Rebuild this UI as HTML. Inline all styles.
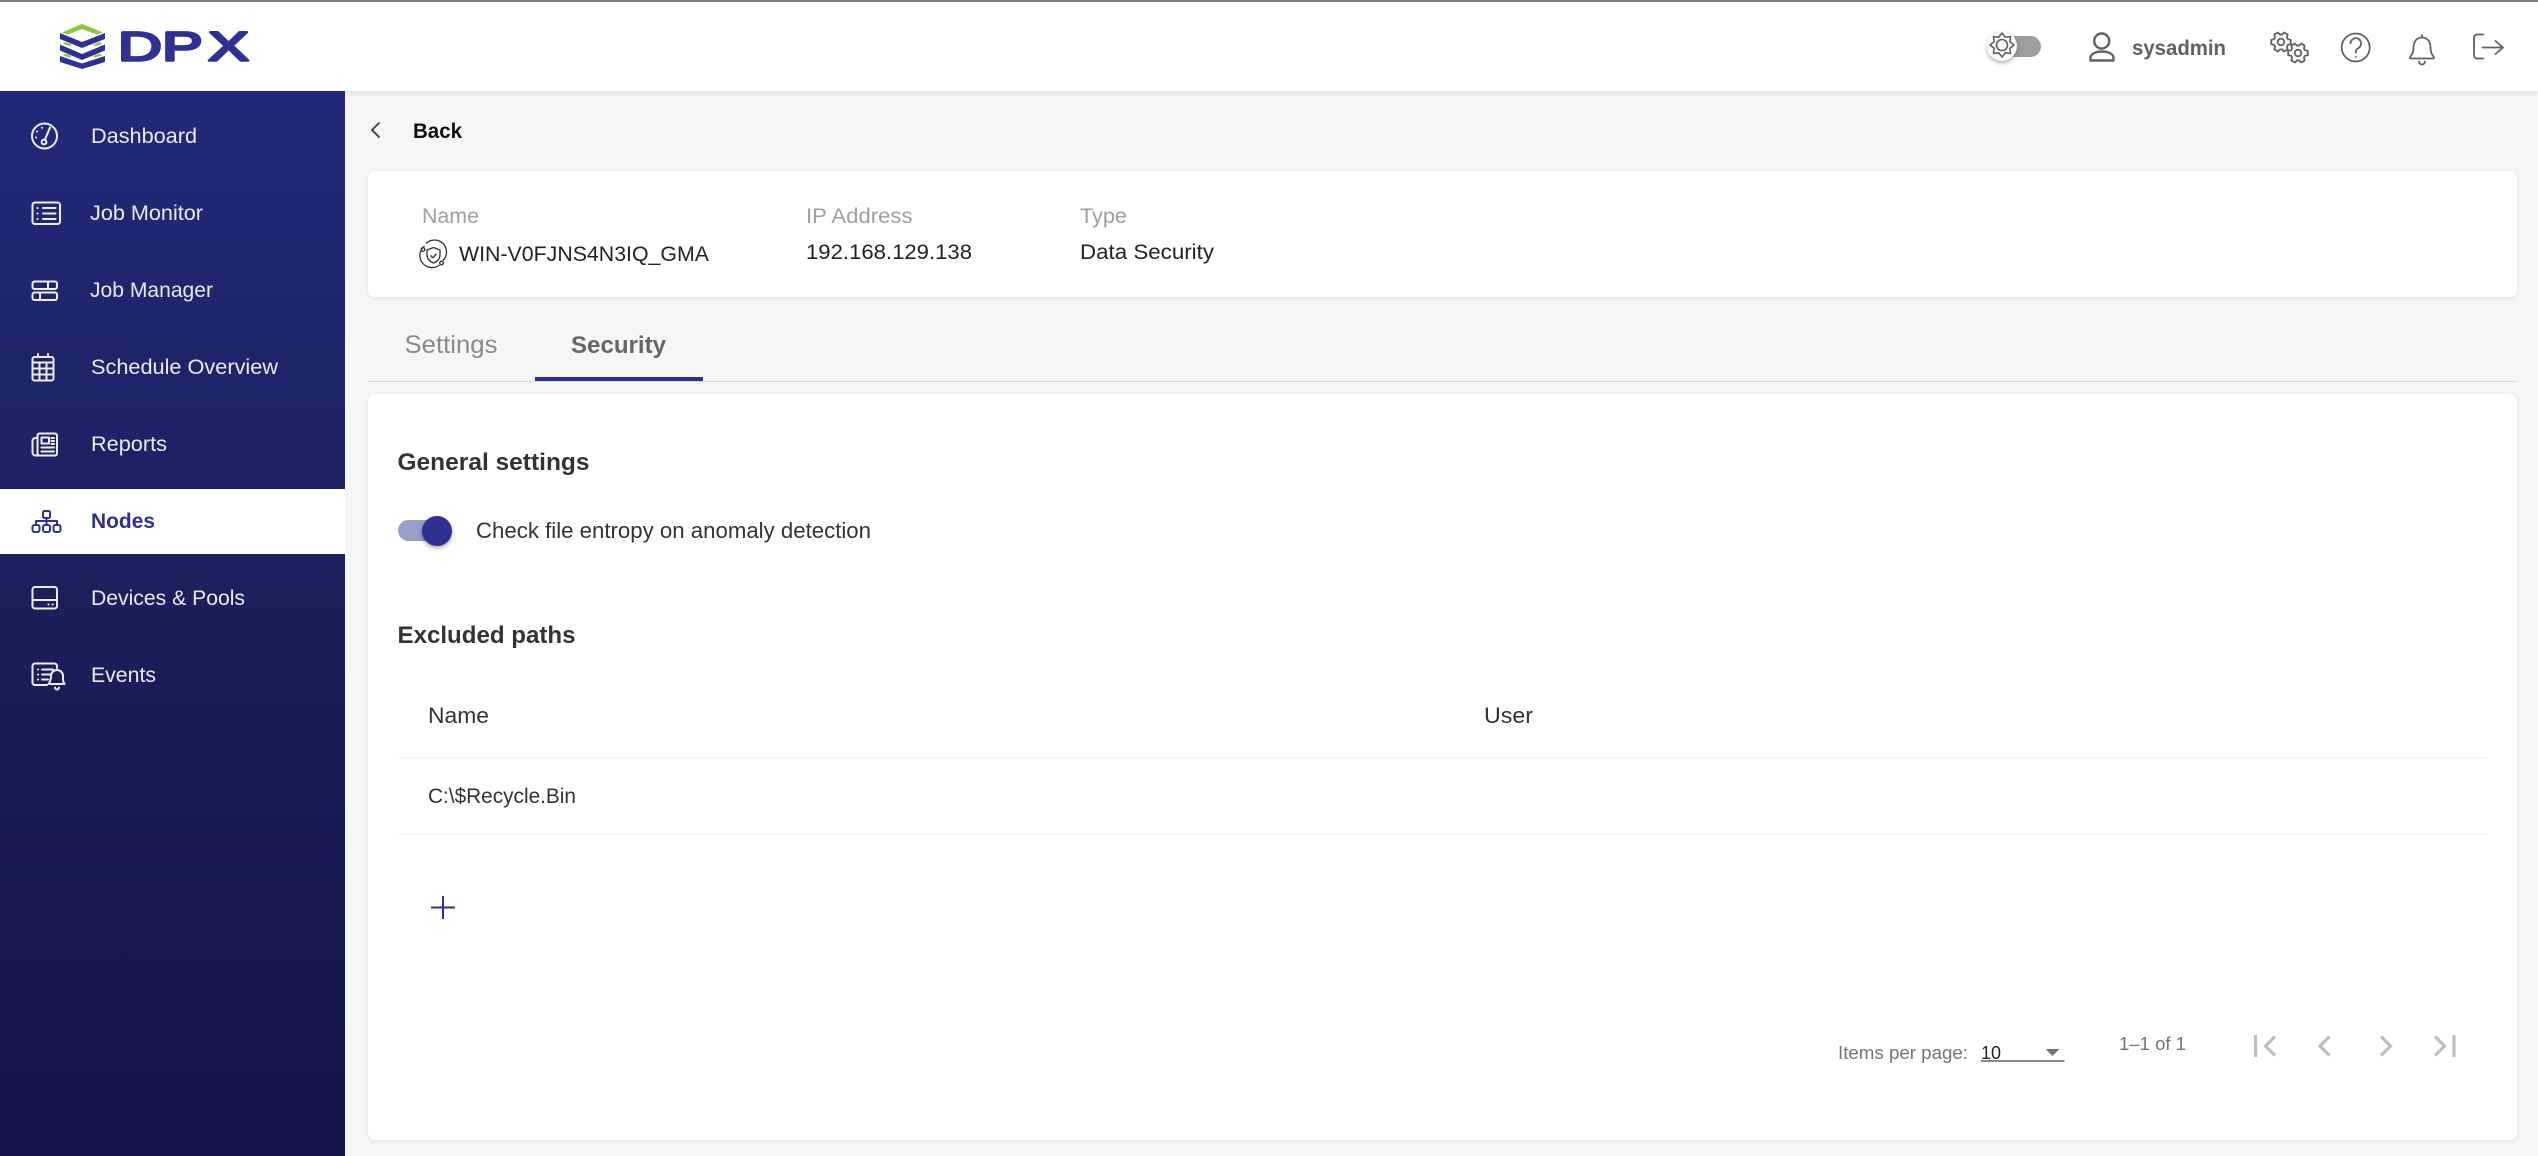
<!DOCTYPE html>
<html lang="en">
<head>
<meta charset="utf-8">
<title>DPX</title>
<style>
html,body{margin:0;padding:0;width:2538px;height:1156px;overflow:hidden;background:#f5f6f8;font-family:"Liberation Sans",sans-serif}
.b{position:absolute;box-sizing:border-box}
svg{position:absolute;left:0;top:0}
text{font-family:"Liberation Sans",sans-serif}
</style>
</head>
<body>
<div class="b" style="left:0;top:0;width:2538px;height:91px;background:#fff;box-shadow:0 2px 6px rgba(0,0,0,.1)"></div>
<div class="b" style="left:0;top:0;width:2538px;height:2px;background:#808080"></div>
<div class="b" style="left:0;top:91px;width:345px;height:1065px;background:linear-gradient(180deg,#23297a 0%,#1f256c 22%,#191d56 59%,#121549 100%)"></div>
<div class="b" style="left:0;top:489px;width:345px;height:65px;background:#fff"></div>
<div class="b" style="left:368px;top:171px;width:2149px;height:126px;background:#fff;border-radius:7px;box-shadow:0 1px 5px rgba(0,0,0,.1)"></div>
<div class="b" style="left:368px;top:381px;width:2149px;height:1px;background:#d8d9de"></div>
<div class="b" style="left:535px;top:377px;width:168px;height:4px;background:#2e3192"></div>
<div class="b" style="left:368px;top:394px;width:2149px;height:746px;background:#fff;border-radius:7px;box-shadow:0 1px 5px rgba(0,0,0,.1)"></div>
<div class="b" style="left:398px;top:757px;width:2088px;height:1px;background:#eee"></div>
<div class="b" style="left:398px;top:834px;width:2088px;height:1px;background:#f1f1f1"></div>
<div class="b" style="left:398px;top:520px;width:46px;height:21px;border-radius:11px;background:#9b9dcb"></div>
<div class="b" style="left:422px;top:516px;width:30px;height:30px;border-radius:50%;background:#2e3192;box-shadow:0 2px 4px rgba(0,0,0,.35)"></div>
<div class="b" style="left:1996px;top:36px;width:45px;height:21px;border-radius:11px;background:#9e9e9e"></div>
<div class="b" style="left:1987px;top:31px;width:30px;height:30px;border-radius:50%;background:#fafafa;box-shadow:0 2px 4px rgba(0,0,0,.3)"></div>

<svg width="2538" height="1156" viewBox="0 0 2538 1156" xmlns="http://www.w3.org/2000/svg">
<defs>
<path id="gear" d="M6.95-2.81L9.78-2.08L9.78 2.08L6.95 2.81L5.91 4.62L6.69 7.43L3.09 9.51L1.04 7.43L-1.04 7.43L-3.09 9.51L-6.69 7.43L-5.91 4.62L-6.95 2.81L-9.78 2.08L-9.78-2.08L-6.95-2.81L-5.91-4.62L-6.69-7.43L-3.09-9.51L-1.04-7.43L1.04-7.43L3.09-9.51L6.69-7.43L5.91-4.62Z"/>
</defs>

<!-- logo -->
<g>
<path fill="#8cc63f" d="M62 32.500L82 24L103 32.500L97 34.500L82 29L68 34.500Z"/>
<g fill="#2e3192">
<path d="M60 33L82 42L105 33V39L82 48L60 39Z"/>
<path d="M60 44.500L82 54L105 44.500V50.500L82 60L60 50.500Z"/>
<path d="M60 56L82 63.500L105 56V62L82 69L60 62Z"/>
</g>
<path fill="#8cc63f" d="M65 42L72 44.500L70 46L63 44ZM100 42L93 44.500L95 46L102 44ZM65 53.500L72 56L70 57.500L63 55.500ZM100 53.500L93 56L95 57.500L102 55.500Z"/>
<text transform="translate(118 60.500) scale(1.5 1)" font-size="40.500" letter-spacing=".2" fill="#2e3192" stroke="#2e3192" stroke-width="2.600" stroke-linejoin="round">DP<tspan dx="3.500">X</tspan></text>
</g>

<!-- sidebar icons -->
<g fill="none" stroke="#eceDf5" stroke-width="2" stroke-linecap="round" stroke-linejoin="round">
<circle cx="44.500" cy="136" r="12.500"/>
<circle cx="44" cy="142" r="2.400"/>
<path d="M45 139.500L50 127.500M37 131.500h.1M42 127.800h.1M36 137.500h.1"/>
<rect x="32.500" y="202.500" width="27.500" height="21.500" rx="2.500"/>
<path d="M43 208h12.500M43 213.500h12.500M43 219h12.500M37.500 208h.1M37.500 213.500h.1M37.500 219h.1"/>
<rect x="32.500" y="281.500" width="24.500" height="7.500" rx="2"/>
<rect x="32.500" y="292.500" width="24.500" height="7.500" rx="2"/>
<path d="M48 281.500v7.500M40 292.500v7.500"/>
<rect x="32.500" y="357" width="21" height="23.500" rx="2"/>
<path d="M38 354v3M48 354v3M32.500 362.500h21M32.500 368.500h21M32.500 374.500h21M39.500 362.500v18M46.500 362.500v18"/>
<rect x="37.500" y="433.500" width="19.500" height="22" rx="2"/>
<path d="M37 438h-1.500a3 3 0 0 0-3 3v11.500a3 3 0 0 0 3 3h3"/>
<rect x="41.500" y="437.500" width="7.500" height="6"/>
<path d="M51.500 438h2.500M51.500 441h2.500M51.500 444h2.500M41.500 447.500h12.500M41.500 451.500h12.500"/>
<rect x="32.500" y="587" width="24.500" height="21.500" rx="2.500"/>
<path d="M32.500 600H57M48.500 604.500h.1M52.500 604.500h.1"/>
<path d="M57 668v-2a2.500 2.500 0 0 0-2.500-2.500H35a2.500 2.500 0 0 0-2.500 2.500v16.500a2.500 2.500 0 0 0 2.500 2.500h12"/>
<path d="M38 669.500h.1M38 674.500h.1M38 679.500h.1M42 669.500h11M42 674.500h8M42 679.500h6"/>
<path d="M57 670a6 6 0 0 0-6 6c0 4-1 6-2.500 8H64.500c-1.500-2-1.500-4-1.500-8a6 6 0 0 0-6-6Z"/>
<path d="M55 687.500a2 2 0 0 0 4 0"/>
</g>
<g fill="none" stroke="#2e3192" stroke-width="2" stroke-linejoin="round">
<rect x="43" y="511" width="7" height="7" rx="1.500"/>
<rect x="32.500" y="525" width="7" height="7" rx="2"/>
<rect x="43" y="525" width="7" height="7" rx="2"/>
<rect x="53.500" y="525" width="7" height="7" rx="2"/>
<path d="M46.500 518v7M36 525v-4h21v4"/>
</g>

<!-- sidebar labels -->
<g font-size="21.500" fill="#e9eaf3">
<text x="91" y="143" textLength="106" lengthAdjust="spacingAndGlyphs">Dashboard</text>
<text x="90" y="220" textLength="113" lengthAdjust="spacingAndGlyphs">Job Monitor</text>
<text x="90" y="297" textLength="123" lengthAdjust="spacingAndGlyphs">Job Manager</text>
<text x="91" y="374" textLength="187" lengthAdjust="spacingAndGlyphs">Schedule Overview</text>
<text x="91" y="451" textLength="76" lengthAdjust="spacingAndGlyphs">Reports</text>
<text x="91" y="528" textLength="64" lengthAdjust="spacingAndGlyphs" font-weight="700" fill="#2e3192">Nodes</text>
<text x="91" y="605" textLength="154" lengthAdjust="spacingAndGlyphs">Devices &amp; Pools</text>
<text x="91" y="682" textLength="65" lengthAdjust="spacingAndGlyphs">Events</text>
</g>

<!-- header right -->
<g fill="none" stroke="#616161" stroke-linecap="round" stroke-linejoin="round">
<path stroke-width="1.600" d="M2014 45L2009.850 48.250L2010.500 53.500L2005.250 52.850L2002 57L1998.750 52.850L1993.500 53.500L1994.150 48.250L1990 45L1994.150 41.750L1993.500 36.500L1998.750 37.150L2002 33L2005.250 37.150L2010.500 36.500L2009.850 41.750Z"/>
<circle cx="2002" cy="45" r="5.500" stroke-width="1.600"/>
<circle cx="2101.700" cy="41" r="7.500" stroke-width="2.400"/>
<path stroke-width="2.400" d="M2090.500 60.500v-2.500c0-4 5-6.500 11.500-6.500s11.500 2.500 11.500 6.500v2.500Z"/>
<use href="#gear" x="2281" y="42" stroke-width="1.800"/>
<circle cx="2281" cy="42" r="3.300" stroke-width="1.800"/>
<use href="#gear" x="2298" y="53" stroke-width="1.800"/>
<circle cx="2298" cy="53" r="3.300" stroke-width="1.800"/>
<circle cx="2355.700" cy="47.500" r="14" stroke-width="1.800"/>
<path stroke-width="1.800" d="M2350.500 43.500a5.300 5.300 0 1 1 8 4.500c-2 1.200-2.800 2-2.800 4.500M2355.700 57h.1"/>
<path stroke-width="1.800" d="M2422 35v2.500c-6 0-8.500 5-8.500 10 0 5-1.500 7-3.300 9.500-.5 1 0 1.500 1 1.500h21.600c1 0 1.500-.5 1-1.500-1.800-2.500-3.300-4.500-3.300-9.500 0-5-2.500-10-8.500-10M2419 61.500a3 3 0 0 0 6 0"/>
<path stroke-width="1.800" d="M2483.500 34.500h-6.500a3 3 0 0 0-3 3v18a3 3 0 0 0 3 3h6.500M2482.500 47.500h20.500M2495.500 41l7.500 6.500-7.500 6.500"/>
</g>
<text x="2132" y="55" font-size="21" font-weight="700" fill="#616161" textLength="94" lengthAdjust="spacingAndGlyphs">sysadmin</text>

<!-- back -->
<path d="M379.500 122.500L372 130l7.500 7.500" fill="none" stroke="#333" stroke-width="1.700"/>
<text x="413" y="138" font-size="21" font-weight="700" fill="#111" textLength="49" lengthAdjust="spacingAndGlyphs">Back</text>

<!-- info card -->
<g font-size="21.500">
<text x="422" y="223" fill="#9e9e9e" textLength="57" lengthAdjust="spacingAndGlyphs">Name</text>
<text x="806" y="223" fill="#9e9e9e" textLength="106.500" lengthAdjust="spacingAndGlyphs">IP Address</text>
<text x="1080" y="223" fill="#9e9e9e" textLength="47" lengthAdjust="spacingAndGlyphs">Type</text>
<text x="459" y="261" fill="#222" textLength="250" lengthAdjust="spacingAndGlyphs">WIN-V0FJNS4N3IQ_GMA</text>
<text x="806" y="259" fill="#222" textLength="166" lengthAdjust="spacingAndGlyphs">192.168.129.138</text>
<text x="1080" y="259" fill="#222" textLength="134" lengthAdjust="spacingAndGlyphs">Data Security</text>
</g>
<g fill="none" stroke="#333" stroke-width="1.300" stroke-linejoin="round">
<path d="M424.500 246a12 12 0 0 0 15 19M426 243.500a12 12 0 0 1 17 17"/>
<circle cx="423" cy="249.500" r="1.800"/>
<circle cx="441.500" cy="263" r="1.800"/>
<path d="M433.500 247.500l6.500 2.500v5c0 4-3 6.500-6.500 8-3.500-1.500-6.500-4-6.500-8v-5Z"/>
<path d="M430.500 255.500l2.300 2.300 3.700-4"/>
</g>

<!-- tabs -->
<text x="404.500" y="353" font-size="25" fill="#8a8a8a" textLength="93" lengthAdjust="spacingAndGlyphs">Settings</text>
<text x="571" y="353" font-size="24" font-weight="700" fill="#666" textLength="95" lengthAdjust="spacingAndGlyphs">Security</text>

<!-- security card -->
<text x="397.500" y="470" font-size="24" font-weight="700" fill="#333" textLength="192" lengthAdjust="spacingAndGlyphs">General settings</text>
<text x="476" y="538" font-size="22" fill="#333" textLength="395" lengthAdjust="spacingAndGlyphs">Check file entropy on anomaly detection</text>
<text x="397.500" y="643" font-size="24" font-weight="700" fill="#333" textLength="178" lengthAdjust="spacingAndGlyphs">Excluded paths</text>
<text x="428" y="723" font-size="22" fill="#333" textLength="61" lengthAdjust="spacingAndGlyphs">Name</text>
<text x="1484" y="723" font-size="22" fill="#333" textLength="49" lengthAdjust="spacingAndGlyphs">User</text>
<text x="428" y="803" font-size="21.500" fill="#333" textLength="148" lengthAdjust="spacingAndGlyphs">C:\$Recycle.Bin</text>
<path d="M431 907.500h24M443 896v23" stroke="#2e3192" stroke-width="2" fill="none"/>

<!-- pagination -->
<text x="1838" y="1059" font-size="18.500" fill="#757575" textLength="130" lengthAdjust="spacingAndGlyphs">Items per page:</text>
<text x="1981" y="1059" font-size="18.500" fill="#222" textLength="20" lengthAdjust="spacingAndGlyphs">10</text>
<rect x="1981" y="1060" width="83.500" height="2" fill="#8c8c8c"/>
<path d="M2045.500 1049h14l-7 7Z" fill="#757575"/>
<text x="2119" y="1050" font-size="18.500" fill="#757575" textLength="67" lengthAdjust="spacingAndGlyphs">1–1 of 1</text>
<g fill="none" stroke="#bdbdbd" stroke-width="3.200">
<path d="M2255.500 1035v22M2275 1036.500l-9.500 9.500 9.500 9.500"/>
<path d="M2329.500 1036.500l-9.500 9.500 9.500 9.500"/>
<path d="M2381 1036.500l9.500 9.500-9.500 9.500"/>
<path d="M2435 1036.500l9.500 9.500-9.500 9.500M2454 1035v22"/>
</g>
</svg>
</body>
</html>
